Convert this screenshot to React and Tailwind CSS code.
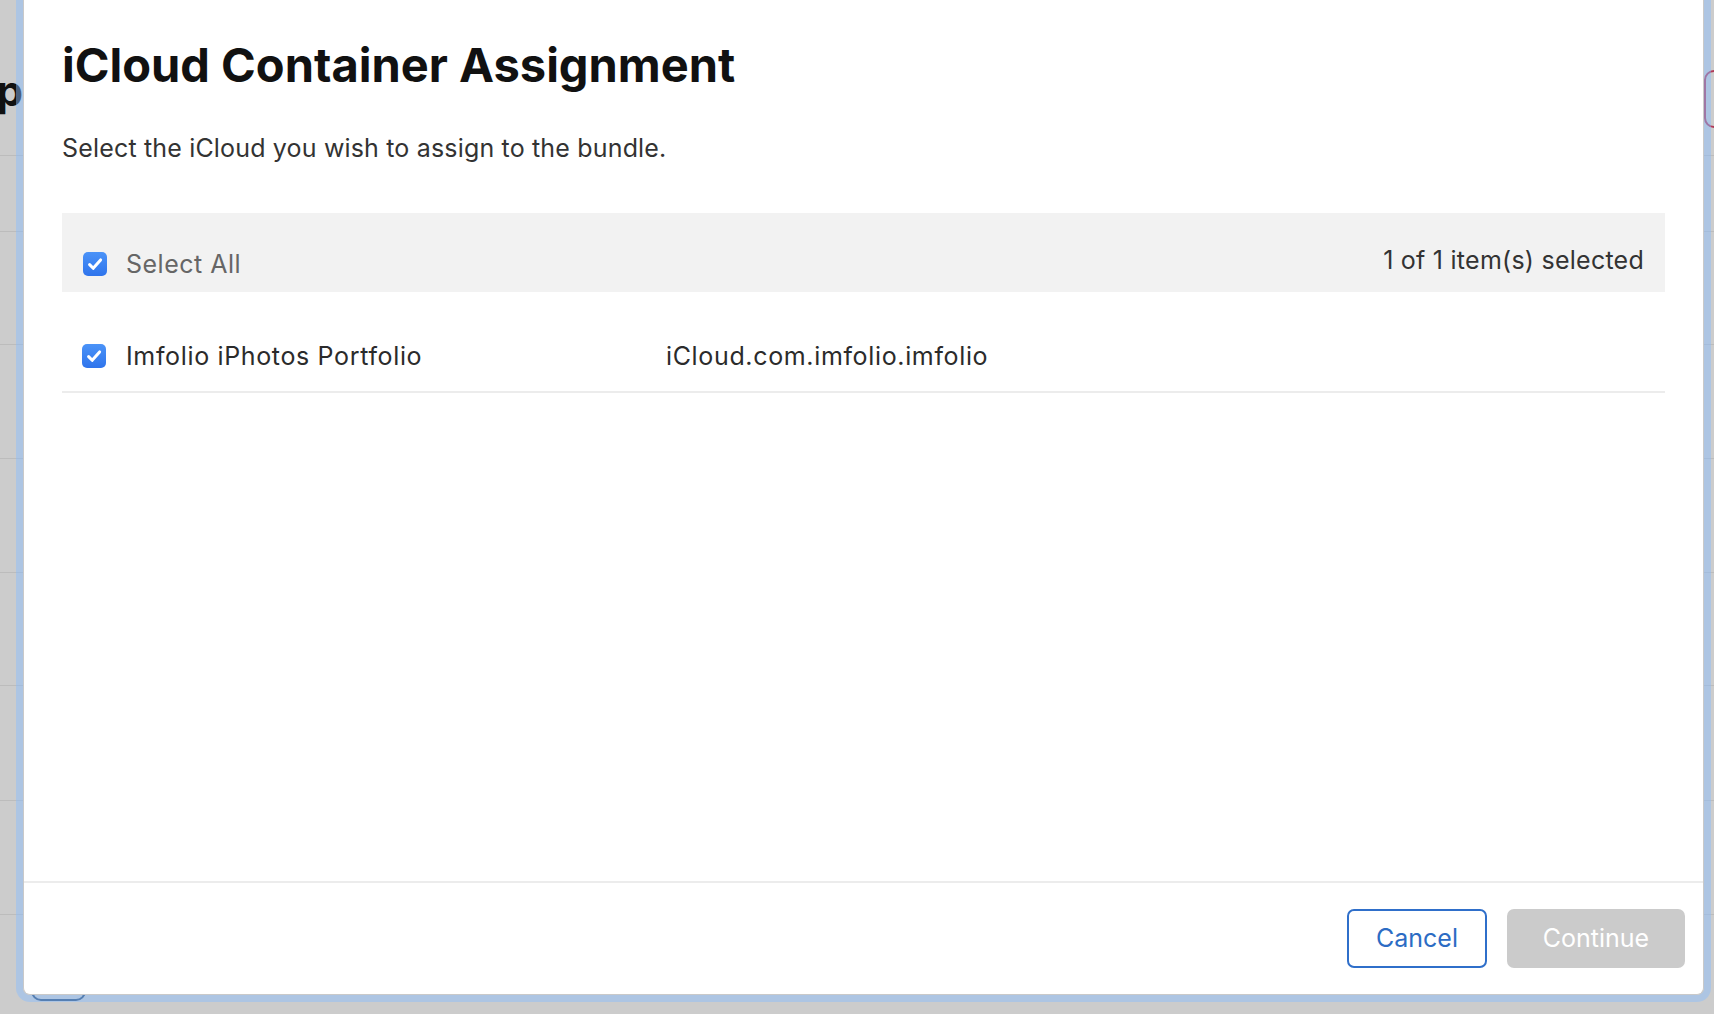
import { useState } from 'react';

const rowLines = [156, 76, 113, 114, 114, 113, 115, 114];

const Checkbox = ({ checked, onChange }) => (
  <button
    type="button"
    onClick={onChange}
    className={`w-[24px] h-[24px] shrink-0 rounded-[5px] flex items-center justify-center ${
      checked ? 'bg-gradient-to-b from-[#4b93f8] to-[#2f74ec]' : 'bg-white border border-[#b5b5b5]'
    }`}
  >
    {checked && (
      <svg width="24" height="24" viewBox="0 0 24 24" fill="none">
        <path
          d="M6.6 12.6l3.6 3.7 7.4-8.4"
          stroke="#fff"
          strokeWidth="3"
          strokeLinecap="round"
          strokeLinejoin="round"
        />
      </svg>
    )}
  </button>
);

const App = () => {
  const [selected, setSelected] = useState(true);

  return (
    <div className="relative w-[1714px] h-[1014px] overflow-hidden bg-[#cccccc] font-['Inter',sans-serif]">
      {/* page behind the dialog */}
      <div className="flex flex-col">
        <div className="flex items-start h-[156px] border-b border-[#bcbcbc]">
          <div className="w-[23px] overflow-hidden flex justify-end mt-[66px]">
            <span className="whitespace-nowrap text-[42px] leading-[50px] font-bold text-[#111]">App</span>
          </div>
          <div className="ml-auto mr-[-120px] mt-[70px] w-[130px] h-[58px] border-2 border-[#b23a58] rounded-[10px]" />
        </div>
        {rowLines.slice(1).map((h, i) => (
          <div key={i} style={{ height: h }} className="border-b border-[#bcbcbc]" />
        ))}
        <div className="pt-[44px] pl-[31px]">
          <div className="w-[55px] h-[42px] border-2 border-[#294a73] rounded-[10px]" />
        </div>
      </div>

      {/* dialog */}
      <div className="absolute top-0 left-[16px] w-[1695px] h-[1002px] border-x-[7px] border-b-[7px] border-[rgba(137,190,255,0.46)] rounded-b-[14px]">
        <div className="h-full flex flex-col bg-white border-x border-b border-[#c9c9c9] rounded-b-[7px]">
          <div className="flex-1 px-[38px] flex flex-col">
            <h1 className="mt-[37px] text-[47px] leading-[56px] font-bold text-[#111]">
              iCloud Container Assignment
            </h1>
            <p className="mt-[40px] text-[25px] leading-[30px] text-[#333] tracking-[0.17px]">
              Select the iCloud you wish to assign to the bundle.
            </p>

            <div className="mt-[50px] h-[79px] bg-[#f2f2f2] flex items-center pt-[23px] pl-[21px] pr-[21px]">
              <Checkbox checked={selected} onChange={() => setSelected(!selected)} />
              <span className="ml-[19px] text-[25px] leading-[30px] text-[#666] tracking-[0.5px]">Select All</span>
              <span className="ml-auto mb-[8px] text-[25px] leading-[30px] text-[#333] tracking-[0.25px]">
                {selected ? 1 : 0} of 1 item(s) selected
              </span>
            </div>

            <div className="flex items-center pt-[49px] pb-[20px] border-b-2 border-[#ececec]">
              <div className="w-[604px] flex items-center pl-[20px]">
                <Checkbox checked={selected} onChange={() => setSelected(!selected)} />
                <span className="ml-[20px] text-[25px] leading-[30px] text-[#2b2b2b] tracking-[0.65px]">
                  Imfolio iPhotos Portfolio
                </span>
              </div>
              <span className="text-[25px] leading-[30px] text-[#2b2b2b] tracking-[0.65px]">
                iCloud.com.imfolio.imfolio
              </span>
            </div>
          </div>

          <div className="border-t-2 border-[#ececec] flex justify-end gap-[20px] pt-[26px] pb-[26px] pr-[18px]">
            <button className="w-[140px] h-[59px] border-2 border-[#2f6fca] rounded-[7px] text-[25px] text-[#2c6cc4]">
              Cancel
            </button>
            <button
              disabled={!selected}
              className="w-[178px] h-[59px] bg-[#cbcbcb] rounded-[7px] text-[25px] text-white"
            >
              Continue
            </button>
          </div>
        </div>
      </div>
    </div>
  );
};

export default App;
